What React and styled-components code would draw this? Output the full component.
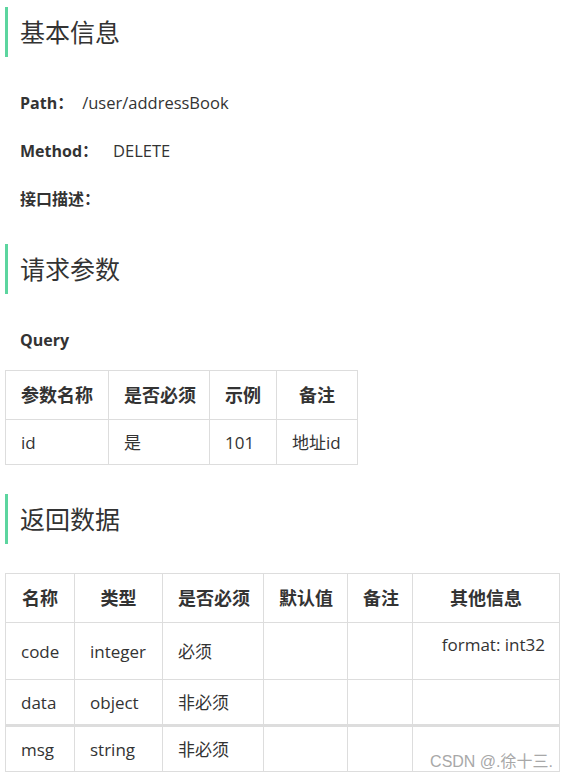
import React from "react";
import styled, { createGlobalStyle } from "styled-components";

const GlobalStyle = createGlobalStyle`
  body {
    margin: 0;
    background: #fff;
    font-family: "Open Sans", "Noto Sans CJK SC", sans-serif;
    color: #333;
  }
`;

const Page = styled.div`
  position: relative;
  width: 565px;
  height: 780px;
  box-sizing: border-box;
  padding: 6px 6px 0 5px;
  overflow: hidden;
`;

const Heading = styled.h2`
  margin: ${({ top }) => top}px 0 0;
  height: 50px;
  line-height: 50px;
  border-left: 3px solid #5cd59f;
  padding-left: 12px;
  font-size: 25px;
  font-weight: 400;
  color: #333;
`;

const InfoList = styled.div`
  margin-top: ${({ top }) => top}px;
  padding-left: 15px;
`;

const InfoRow = styled.div`
  display: flex;
  align-items: center;
  height: 48px;
  font-size: 16.5px;
`;

const Label = styled.span`
  font-weight: 700;
  font-size: 16px;
  margin-right: ${({ gap }) => gap}px;
`;

const Table = styled.table`
  margin-top: ${({ top }) => top}px;
  border-collapse: collapse;
  table-layout: fixed;
  width: ${({ width }) => width}px;
  font-size: 17px;
  line-height: 24px;
  color: #333;

  th,
  td {
    border: 1px solid #ddd;
    white-space: nowrap;
  }

  th {
    font-size: 18px;
    font-weight: 700;
    text-align: center;
    padding: 12px 15px;
  }

  td {
    text-align: left;
    padding: 11px 15px 9px;
  }
`;

const Row = styled.tr`
  ${({ thick }) => thick && "td { border-top: 3px solid #ddd; }"}
`;

const OtherCell = styled.td`
  && {
    vertical-align: top;
    text-align: right;
    padding: 10px 14px 22px 15px;
  }
`;

const Watermark = styled.div`
  position: absolute;
  right: 12px;
  bottom: 8px;
  font-family: "Liberation Sans", "Noto Sans CJK SC", sans-serif;
  font-size: 16px;
  color: #a8a8a8;
`;

const queryCols = [103, 101, 67, 81];
const returnCols = [69, 88, 101, 84, 65, 147];

const returnRows = [
  { name: "code", type: "integer", req: "必须", other: "format: int32" },
  { name: "data", type: "object", req: "非必须", other: "" },
  { name: "msg", type: "string", req: "非必须", other: "", thick: true },
];

export default function App() {
  return (
    <>
      <GlobalStyle />
      <Page>
        <Heading top={1}>基本信息</Heading>
        <InfoList top={21}>
          <InfoRow>
            <Label gap={9}>Path：</Label>/user/addressBook
          </InfoRow>
          <InfoRow>
            <Label gap={15}>Method：</Label>DELETE
          </InfoRow>
          <InfoRow>
            <Label gap={0}>接口描述：</Label>
          </InfoRow>
        </InfoList>

        <Heading top={22}>请求参数</Heading>
        <InfoList top={22}>
          <InfoRow>
            <Label gap={0}>Query</Label>
          </InfoRow>
        </InfoList>
        <Table top={6} width={352}>
          <colgroup>
            {queryCols.map((w, i) => (
              <col key={i} style={{ width: w }} />
            ))}
          </colgroup>
          <thead>
            <tr>
              <th>参数名称</th>
              <th>是否必须</th>
              <th>示例</th>
              <th>备注</th>
            </tr>
          </thead>
          <tbody>
            <Row>
              <td>id</td>
              <td>是</td>
              <td>101</td>
              <td>地址id</td>
            </Row>
          </tbody>
        </Table>

        <Heading top={29}>返回数据</Heading>
        <Table top={29} width={554}>
          <colgroup>
            {returnCols.map((w, i) => (
              <col key={i} style={{ width: w }} />
            ))}
          </colgroup>
          <thead>
            <tr>
              <th>名称</th>
              <th>类型</th>
              <th>是否必须</th>
              <th>默认值</th>
              <th>备注</th>
              <th>其他信息</th>
            </tr>
          </thead>
          <tbody>
            {returnRows.map((r) => (
              <Row key={r.name} thick={r.thick}>
                <td>{r.name}</td>
                <td>{r.type}</td>
                <td>{r.req}</td>
                <td></td>
                <td></td>
                <OtherCell>{r.other}</OtherCell>
              </Row>
            ))}
          </tbody>
        </Table>
        <Watermark>CSDN @.徐十三.</Watermark>
      </Page>
    </>
  );
}
